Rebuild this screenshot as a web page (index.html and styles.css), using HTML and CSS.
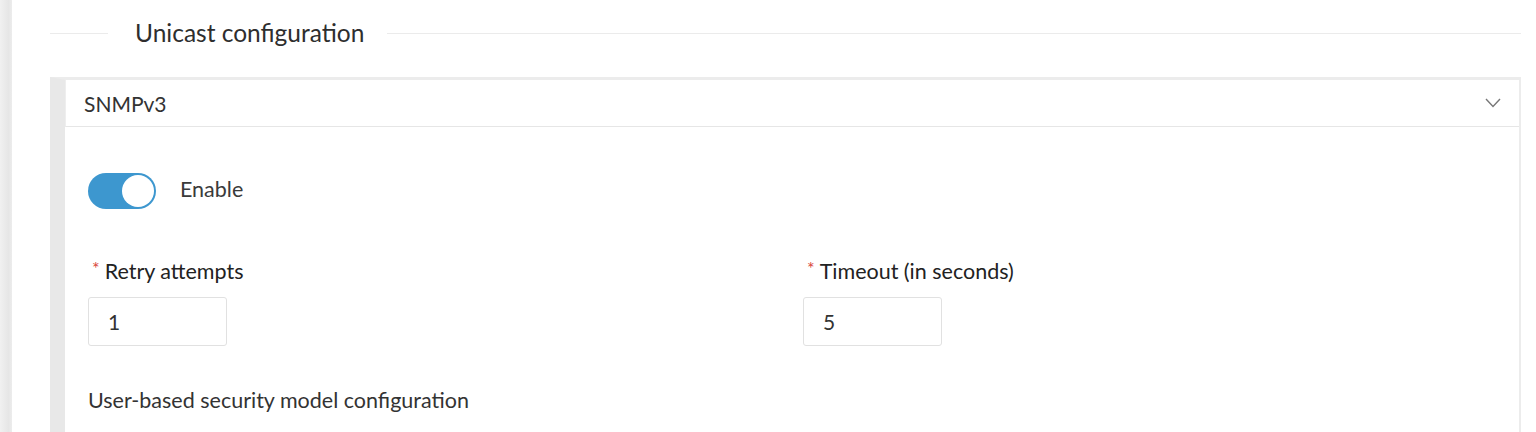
FILE: index.html
```html
<!DOCTYPE html>
<html>
<head>
<meta charset="utf-8">
<link rel="stylesheet" href="styles.css">
</head>
<body>
<div class="page">
  <div class="side-strip"></div>
  <main class="main">
    <div class="section-title">
      <span class="rule rule-short"></span>
      <h2 class="title-text">Unicast configuration</h2>
      <span class="rule rule-long"></span>
    </div>
    <section class="panel">
      <div class="panel-header">
        <span class="panel-name">SNMPv3</span>
        <svg class="chevron" width="16" height="10" viewBox="0 0 16 10"><path d="M1 1 L8 8.5 L15 1" fill="none" stroke="#777" stroke-width="1.4"/></svg>
      </div>
      <div class="panel-body">
        <div class="toggle-row">
          <div class="toggle"><span class="knob"></span></div>
          <span class="toggle-label">Enable</span>
        </div>
        <div class="fields">
          <div class="field">
            <label class="field-label"><span class="req">*</span>Retry attempts</label>
            <div class="input">1</div>
          </div>
          <div class="field">
            <label class="field-label"><span class="req">*</span>Timeout (in seconds)</label>
            <div class="input">5</div>
          </div>
        </div>
        <div class="subheading">User-based security model configuration</div>
      </div>
    </section>
  </main>
</div>
</body>
</html>
```

FILE: styles.css
```css
* { box-sizing: border-box; }
html, body { margin: 0; padding: 0; background: #fff; }
body {
  font-family: Lato, "Open Sans", "Liberation Sans", sans-serif;
  color: #333;
  width: 1536px;
  height: 432px;
  overflow: hidden;
}
.page { display: flex; height: 432px; }
.side-strip {
  width: 12px;
  flex: none;
  background: linear-gradient(to right, #f1f1f1, #e6e6e6 70%, #ececec);
}
.main {
  flex: 1;
  display: flex;
  flex-direction: column;
  padding: 18px 15px 0 38px;
}
.section-title {
  display: flex;
  align-items: center;
  height: 30px;
}
.rule { height: 1px; background: #ebebeb; }
.rule-short { width: 58px; }
.rule-long { flex: 1; }
.title-text {
  margin: 0 23px 0 27px;
  font-size: 24.5px;
  font-weight: 400;
  line-height: 30px;
  color: #2e2e2e;
}
.panel {
  flex: 1;
  margin-top: 29px;
  background: #fff;
  border-left: 15px solid #e8e8e8;
  border-top: 3px solid #ececec;
  border-right: 2px solid #ececec;
  overflow: hidden;
}
.panel-header {
  height: 47px;
  display: flex;
  align-items: center;
  justify-content: space-between;
  padding: 0 18px 0 18px;
  border-left: 1px solid #eee;
  border-bottom: 1px solid #e6e6e6;
}
.panel-name { font-size: 21px; color: #333; }
.panel-body {
  padding: 46px 23px 0 23px;
}
.toggle-row { display: flex; align-items: center; height: 36px; }
.toggle {
  width: 68px;
  height: 36px;
  border-radius: 18px;
  background: #3d97cf;
  padding: 2px;
  display: flex;
  justify-content: flex-end;
}
.knob {
  width: 32px;
  height: 32px;
  border-radius: 50%;
  background: #fff;
}
.toggle-label { margin-left: 24px; font-size: 21.5px; line-height: 26px; color: #3a3a3a; position: relative; top: -2px; }
.fields {
  display: grid;
  grid-template-columns: 691px 691px;
  column-gap: 24px;
  margin-top: 49px;
}
.field-label {
  display: block;
  padding-left: 4px;
  font-size: 21.5px;
  line-height: 26px;
  color: #222;
}
.req { color: #d9463b; font-size: 18px; margin-right: 5px; position: relative; top: -4px; }
.input {
  margin-top: 12px;
  width: 139px;
  height: 49px;
  border: 1px solid #e1e1e1;
  border-radius: 3px;
  padding: 0 19px;
  display: flex;
  align-items: center;
  font-size: 21px;
  color: #333;
}
.subheading {
  margin-top: 41px;
  font-size: 21.5px;
  line-height: 26px;
  color: #333;
}
```
